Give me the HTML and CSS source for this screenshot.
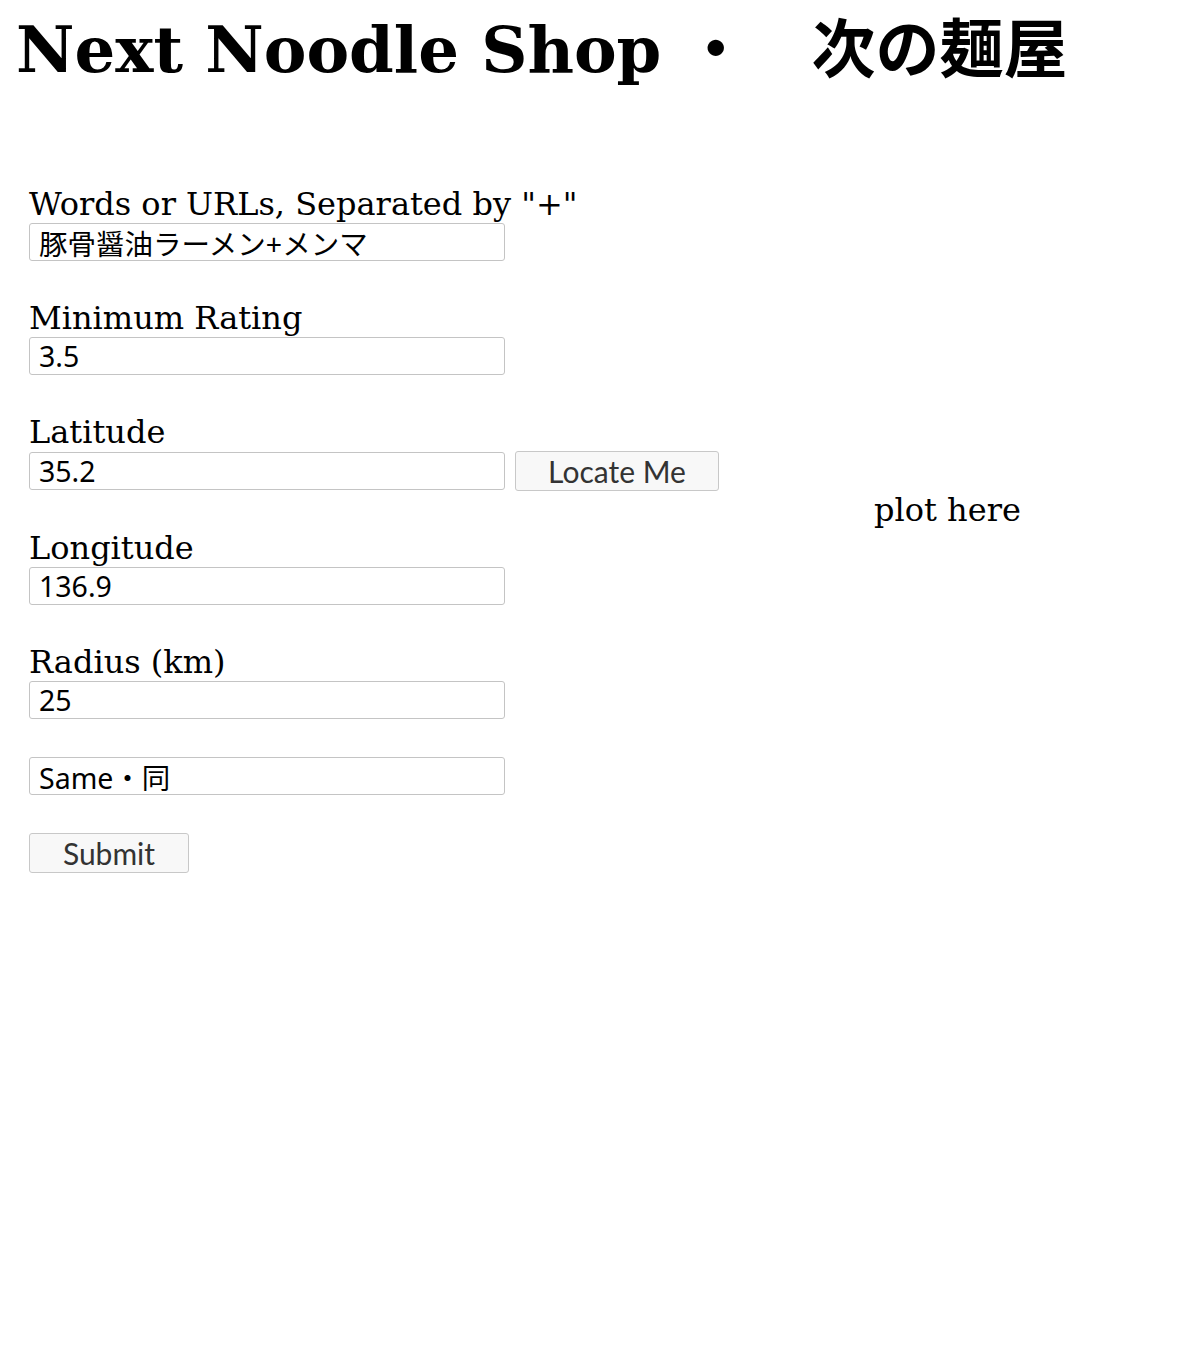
FILE: index.html
```html
<!DOCTYPE html>
<html lang="ja">
<head>
<meta charset="utf-8">
<title>Next Noodle Shop</title>
<link rel="stylesheet" href="styles.css">
</head>
<body>
<h1 class="title">Next Noodle Shop ・　次の麺屋</h1>
<main class="main">
  <form class="form">
    <div class="field">
      <label class="label" for="q">Words or URLs, Separated by "+"</label>
      <input class="input" id="q" type="text" value="豚骨醤油ラーメン+メンマ">
    </div>
    <div class="field">
      <label class="label" for="r">Minimum Rating</label>
      <input class="input" id="r" type="text" value="3.5">
    </div>
    <div class="field">
      <label class="label" for="lat">Latitude</label>
      <div class="row">
        <input class="input" id="lat" type="text" value="35.2">
        <button class="btn btn-locate" type="button">Locate Me</button>
      </div>
    </div>
    <div class="field">
      <label class="label" for="lng">Longitude</label>
      <input class="input" id="lng" type="text" value="136.9">
    </div>
    <div class="field">
      <label class="label" for="rad">Radius (km)</label>
      <input class="input" id="rad" type="text" value="25">
    </div>
    <div class="field">
      <input class="input" type="text" value="Same・同">
    </div>
    <div class="field">
      <button class="btn btn-submit" type="submit">Submit</button>
    </div>
  </form>
  <section class="plot">plot here</section>
</main>
</body>
</html>
```

FILE: styles.css
```css
html, body {
  margin: 0;
  padding: 0;
  background: #fff;
  color: #000;
}

body {
  font-family: "DejaVu Serif", serif;
}

.title {
  margin: 12px 0 0 16px;
  font-family: "DejaVu Serif", "Noto Sans CJK JP", serif;
  font-weight: bold;
  font-size: 64px;
  line-height: 75px;
  white-space: nowrap;
}

.main {
  display: flex;
  align-items: flex-start;
  margin-top: 98px;
}

.form {
  flex: 0 0 auto;
  box-sizing: border-box;
  width: 713px;
  padding-left: 29px;
  display: flex;
  flex-direction: column;
  align-items: flex-start;
  gap: 38px;
}

.field {
  display: flex;
  flex-direction: column;
  align-items: flex-start;
}

.label {
  display: block;
  font-size: 32px;
  line-height: 38px;
  white-space: nowrap;
}

.row {
  display: flex;
  gap: 10px;
  align-items: center;
}

.row > * {
  flex-shrink: 0;
}

.input {
  box-sizing: border-box;
  width: 476px;
  height: 38px;
  margin: 0;
  padding: 0 9px;
  border: 1px solid #c4c4c4;
  border-radius: 3px;
  background: #fff;
  color: #000;
  font-family: "Noto Sans", "Noto Sans CJK JP", sans-serif;
  font-size: 28.5px;
}

.btn {
  box-sizing: border-box;
  height: 40px;
  margin: 0;
  padding: 0;
  border: 1px solid #c8c8c8;
  border-radius: 3px;
  background: #f8f8f8;
  color: #333;
  font-family: "Lato", "Noto Sans", sans-serif;
  font-size: 30px;
}

.btn-locate {
  width: 204px;
}

.btn-submit {
  width: 160px;
}

.plot {
  flex: 1;
  padding-top: 306px;
  text-align: center;
  font-size: 32px;
  line-height: 38px;
}
```
